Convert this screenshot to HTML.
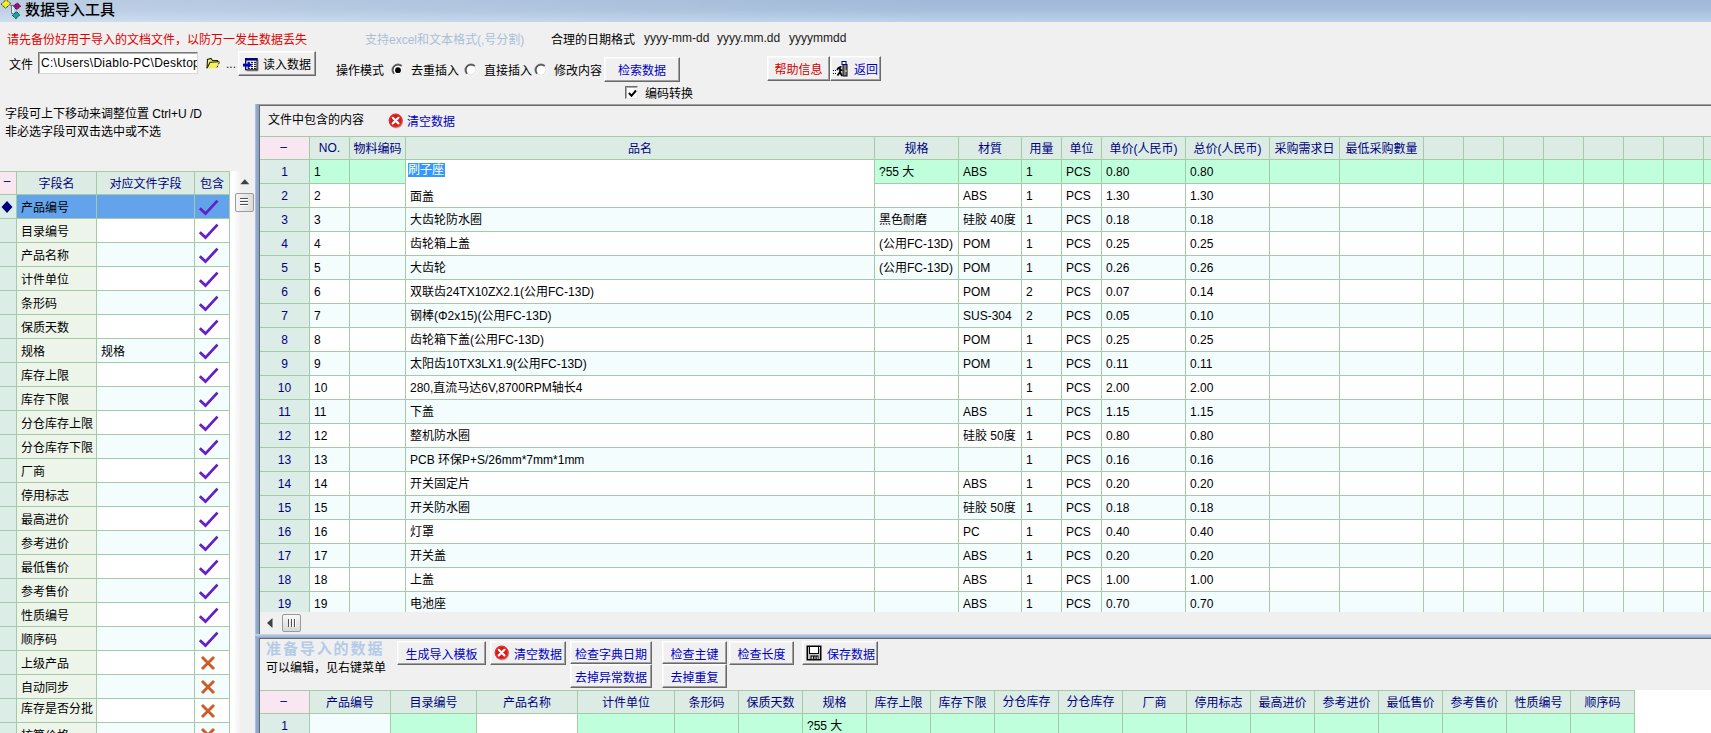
<!DOCTYPE html>
<html lang="zh"><head><meta charset="utf-8"><title>数据导入工具</title><style>
html,body{margin:0;padding:0;background:#f0f0f0}
body{width:1711px;height:733px;overflow:hidden;background:#f0f0f0;position:relative;font-family:"Liberation Sans","Noto Sans CJK SC",sans-serif;font-size:12px;color:#000}
div{position:absolute;box-sizing:border-box}
.t{white-space:nowrap;font-size:12px;line-height:14px}
.c{text-align:center}
.grid{overflow:hidden}
#title{left:0;top:0;width:1711px;height:22px;background:linear-gradient(to right,rgba(255,255,255,.28),rgba(255,255,255,0) 55%),linear-gradient(to bottom,#a2bad8 0,#a6bedb 45%,#bbd2ea 100%)}
.btn{border:1px solid;border-color:#fff #696969 #696969 #fff;box-shadow:inset -1px -1px 0 #a0a0a0,inset 1px 1px 0 #f8f8f8}
</style></head><body>
<div id="title"></div>
<svg style="position:absolute;left:0;top:0" width="24" height="22" viewBox="0 0 24 22">
<path d="M10 5.5 H13.5 M11.5 5.5 V13.5 H13.5" fill="none" stroke="#607890" stroke-width="1"/>
<rect x="12" y="6" width="2" height="7" fill="#d8f0ff"/>
<polygon points="1.2,4.2 6.2,-0.3 10.6,3.6 5.6,8.3" fill="#f0f020" stroke="#101000" stroke-width="1" stroke-dasharray="1.2,0.8"/>
<polygon points="13.3,6 17.4,3 20.8,6.2 16.6,9.6" fill="#b00878" stroke="#180010" stroke-width="1" stroke-dasharray="1.2,0.8"/>
<polygon points="12.4,15.3 16.4,11.6 19.8,15 15.8,18.8" fill="#10a8a8" stroke="#001818" stroke-width="1" stroke-dasharray="1.2,0.8"/>
</svg>
<div class="t" style="left:25px;top:1px;color:#000;font-size:15px;line-height:18px;font-weight:500;">数据导入工具</div>
<div class="t" style="left:7px;top:33px;color:#e00000;">请先备份好用于导入的文档文件，以防万一发生数据丢失</div>
<div class="t" style="left:365px;top:33px;color:#a9bfd8;">支持excel和文本格式(,号分割)</div>
<div class="t" style="left:551px;top:33px;color:#000;">合理的日期格式</div>
<div class="t" style="left:644px;top:31px;color:#202020;">yyyy-mm-dd</div>
<div class="t" style="left:717px;top:31px;color:#202020;">yyyy.mm.dd</div>
<div class="t" style="left:789px;top:31px;color:#202020;">yyyymmdd</div>
<div class="t" style="left:9px;top:58px;">文件</div>
<div class="b" style="left:38px;top:52px;width:160px;height:22px;background:#fff;border:1px solid;border-color:#7a7a7a #d8d8d8 #d8d8d8 #7a7a7a;box-shadow:inset 1px 1px 0 #b0b0b0;overflow:hidden;"><div class="t" style="left:2px;top:3px;letter-spacing:0.27px">C:\Users\Diablo-PC\Desktop\</div></div>
<svg style="position:absolute;left:206px;top:57px" width="15" height="13" viewBox="0 0 15 13">
<path d="M1 11.5 L1.5 2.5 L5 1.5 L6.5 3.5 L11.5 3.5 L11.5 5" fill="#f4f478" stroke="#202000" stroke-width="1.1"/>
<path d="M1 11.5 L4 5.2 L13.8 4.8 L10.5 11.5 Z" fill="#f0f060" stroke="none"/>
<path d="M1.2 11 L4 5.2 L13.5 4.8" fill="none" stroke="#202000" stroke-width="1.1"/>
<path d="M13.3 5.5 L11 10.5" fill="none" stroke="#202000" stroke-width="1" stroke-dasharray="2,1.5"/>
</svg>
<div class="t" style="left:226px;top:57px;color:#202020;">...</div>
<div class="b btn" style="left:238px;top:51px;width:78px;height:25px;background:#f0f0f0;"><svg style="position:absolute;left:3px;top:5px" width="18" height="16" viewBox="0 0 18 16">
<path d="M16 2.5 V13.8 H4.5" fill="none" stroke="#808080" stroke-width="1"/>
<rect x="3.7" y="1.5" width="11.3" height="11.3" fill="#fff" stroke="#000" stroke-width="1"/>
<rect x="3.2" y="1" width="12.3" height="2.6" fill="#000080"/>
<path d="M3.7 1 V13" stroke="#000060" stroke-width="1"/>
<path d="M5.8 5.3 H14.5 M5.8 7.3 H14.5 M5.8 9.4 H14.5 M5.8 11.4 H14.5" stroke="#000" stroke-width="1" stroke-dasharray="2.1,1"/>
<path d="M1 8.1 H7" stroke="#0000d0" stroke-width="2.9"/><polygon points="5.6,4.6 10,8.1 5.6,11.6" fill="#0000d0"/>
</svg><div class="t" style="left:24px;top:6px;color:#000">读入数据</div></div>
<div class="t" style="left:336px;top:64px;">操作模式</div>
<svg style="position:absolute;left:390.8px;top:63.3px" width="14" height="14" viewBox="0 0 14 14">
<circle cx="7" cy="7" r="6.2" fill="#fff"/>
<path d="M2.4 11.6 A6.5 6.5 0 0 1 11.6 2.4 L10.54 3.46 A5 5 0 0 0 3.46 10.54 Z" fill="#707070"/>
<path d="M3.1 10.9 A5.5 5.5 0 0 1 10.9 3.1 L10.2 3.8 A4.5 4.5 0 0 0 3.8 10.2 Z" fill="#404040"/>
<path d="M11.6 2.4 A6.5 6.5 0 0 1 2.4 11.6 L3.1 10.9 A5.5 5.5 0 0 0 10.9 3.1 Z" fill="#fbfbfb"/>
<path d="M10.9 3.1 A5.5 5.5 0 0 1 3.1 10.9 L3.8 10.2 A4.5 4.5 0 0 0 10.2 3.8 Z" fill="#dedede"/><circle cx="7" cy="7.2" r="2.9" fill="#000"/></svg>
<div class="t" style="left:411px;top:64px;">去重插入</div>
<svg style="position:absolute;left:463.8px;top:63.3px" width="14" height="14" viewBox="0 0 14 14">
<circle cx="7" cy="7" r="6.2" fill="#fff"/>
<path d="M2.4 11.6 A6.5 6.5 0 0 1 11.6 2.4 L10.54 3.46 A5 5 0 0 0 3.46 10.54 Z" fill="#707070"/>
<path d="M3.1 10.9 A5.5 5.5 0 0 1 10.9 3.1 L10.2 3.8 A4.5 4.5 0 0 0 3.8 10.2 Z" fill="#404040"/>
<path d="M11.6 2.4 A6.5 6.5 0 0 1 2.4 11.6 L3.1 10.9 A5.5 5.5 0 0 0 10.9 3.1 Z" fill="#fbfbfb"/>
<path d="M10.9 3.1 A5.5 5.5 0 0 1 3.1 10.9 L3.8 10.2 A4.5 4.5 0 0 0 10.2 3.8 Z" fill="#dedede"/></svg>
<div class="t" style="left:484px;top:64px;">直接插入</div>
<svg style="position:absolute;left:533.6px;top:63.3px" width="14" height="14" viewBox="0 0 14 14">
<circle cx="7" cy="7" r="6.2" fill="#fff"/>
<path d="M2.4 11.6 A6.5 6.5 0 0 1 11.6 2.4 L10.54 3.46 A5 5 0 0 0 3.46 10.54 Z" fill="#707070"/>
<path d="M3.1 10.9 A5.5 5.5 0 0 1 10.9 3.1 L10.2 3.8 A4.5 4.5 0 0 0 3.8 10.2 Z" fill="#404040"/>
<path d="M11.6 2.4 A6.5 6.5 0 0 1 2.4 11.6 L3.1 10.9 A5.5 5.5 0 0 0 10.9 3.1 Z" fill="#fbfbfb"/>
<path d="M10.9 3.1 A5.5 5.5 0 0 1 3.1 10.9 L3.8 10.2 A4.5 4.5 0 0 0 10.2 3.8 Z" fill="#dedede"/></svg>
<div class="t" style="left:554px;top:64px;">修改内容</div>
<div class="b btn" style="left:604px;top:57px;width:76px;height:25px;background:#f0f0f0;"><div class="t c" style="left:0;top:6px;width:74px;color:#0000c0">检索数据</div></div>
<div class="b btn" style="left:767px;top:56px;width:63px;height:25px;background:#f0f0f0;"><div class="t c" style="left:0;top:6px;width:61px;color:#d00000">帮助信息</div></div>
<div class="b btn" style="left:830px;top:56px;width:51px;height:25px;background:#f0f0f0;"><svg style="position:absolute;left:1px;top:3px" width="18" height="18" viewBox="0 0 18 18">
<rect x="11" y="4.5" width="4" height="11.5" fill="#808080" stroke="#000" stroke-width="1"/>
<rect x="10" y="1.5" width="4" height="3" fill="#fff" stroke="#000080" stroke-width="1"/>
<path d="M9.5 6.5 L6.5 8 L5 10 M8 8 L8 12 L5.5 15.5 M8 12 L10 16 M8 9.5 L10.5 10.5" fill="none" stroke="#000" stroke-width="1.7"/>
<rect x="13.5" y="10" width="1" height="2" fill="#e0e0e0"/>
<path d="M1 10.5 H4 M1 13.5 H4" stroke="#000" stroke-width="1" stroke-dasharray="1,1"/>
</svg><div class="t" style="left:23px;top:6px;color:#0000c0">返回</div></div>
<div class="b" style="left:625px;top:86px;width:13px;height:13px;background:#fff;border:1px solid;border-color:#6e6e6e #e8e8e8 #e8e8e8 #6e6e6e;box-shadow:inset 1px 1px 0 #a8a8a8;"><svg style="position:absolute;left:1px;top:1px" width="11" height="11" viewBox="0 0 11 11"><path d="M2 5 L4.5 7.8 L9 2.5" fill="none" stroke="#000" stroke-width="2"/></svg></div>
<div class="t" style="left:645px;top:87px;">编码转换</div>
<div class="t" style="left:5px;top:107px;">字段可上下移动来调整位置 Ctrl+U /D</div>
<div class="t" style="left:5px;top:125px;">非必选字段可双击选中或不选</div>
<div class="grid" style="left:0;top:171px;width:235px;height:562px;background:#fff">
<div style="left:0px;top:0px;width:230px;height:24px;background:#a5caa6;"></div>
<div style="left:0px;top:1px;width:16px;height:22px;background:#f8e6f0;"></div>
<div style="left:17px;top:1px;width:79px;height:22px;background:#dcece4;"></div>
<div style="left:97px;top:1px;width:97px;height:22px;background:#dcece4;"></div>
<div style="left:195px;top:1px;width:34px;height:22px;background:#dcece4;"></div>
<div class="t c" style="left:0px;top:3px;width:14px;color:#000080;">–</div>
<div class="t c" style="left:17px;top:6px;width:79px;color:#000080;">字段名</div>
<div class="t c" style="left:97px;top:6px;width:97px;color:#000080;">对应文件字段</div>
<div class="t c" style="left:195px;top:6px;width:34px;color:#000080;">包含</div>
<div style="left:0px;top:24px;width:230px;height:24px;background:#a5caa6;"></div>
<div style="left:0px;top:24px;width:16px;height:23px;background:#dcece6;"></div>
<div style="left:17px;top:24px;width:79px;height:23px;background:#62a3eb;"></div>
<div style="left:97px;top:24px;width:97px;height:23px;background:#62a3eb;"></div>
<div style="left:195px;top:24px;width:34px;height:23px;background:#62a3eb;"></div>
<div class="t" style="left:21px;top:30px;">产品编号</div>
<svg style="position:absolute;left:198px;top:27px" width="22" height="18" viewBox="0 0 22 18"><path d="M1.8 10.3 L7.5 15.6 L19.5 2.6" fill="none" stroke="#6420c4" stroke-width="2.8"/></svg>
<div style="left:0px;top:48px;width:230px;height:24px;background:#a5caa6;"></div>
<div style="left:0px;top:48px;width:16px;height:23px;background:#dcece6;"></div>
<div style="left:17px;top:48px;width:79px;height:23px;background:#edf5ea;"></div>
<div style="left:97px;top:48px;width:97px;height:23px;background:#fff;"></div>
<div style="left:195px;top:48px;width:34px;height:23px;background:#fff;"></div>
<div class="t" style="left:21px;top:54px;">目录编号</div>
<svg style="position:absolute;left:198px;top:51px" width="22" height="18" viewBox="0 0 22 18"><path d="M1.8 10.3 L7.5 15.6 L19.5 2.6" fill="none" stroke="#6420c4" stroke-width="2.8"/></svg>
<div style="left:0px;top:72px;width:230px;height:24px;background:#a5caa6;"></div>
<div style="left:0px;top:72px;width:16px;height:23px;background:#dcece6;"></div>
<div style="left:17px;top:72px;width:79px;height:23px;background:#edf5ea;"></div>
<div style="left:97px;top:72px;width:97px;height:23px;background:#f3fdfd;"></div>
<div style="left:195px;top:72px;width:34px;height:23px;background:#f3fdfd;"></div>
<div class="t" style="left:21px;top:78px;">产品名称</div>
<svg style="position:absolute;left:198px;top:75px" width="22" height="18" viewBox="0 0 22 18"><path d="M1.8 10.3 L7.5 15.6 L19.5 2.6" fill="none" stroke="#6420c4" stroke-width="2.8"/></svg>
<div style="left:0px;top:96px;width:230px;height:24px;background:#a5caa6;"></div>
<div style="left:0px;top:96px;width:16px;height:23px;background:#dcece6;"></div>
<div style="left:17px;top:96px;width:79px;height:23px;background:#edf5ea;"></div>
<div style="left:97px;top:96px;width:97px;height:23px;background:#fff;"></div>
<div style="left:195px;top:96px;width:34px;height:23px;background:#fff;"></div>
<div class="t" style="left:21px;top:102px;">计件单位</div>
<svg style="position:absolute;left:198px;top:99px" width="22" height="18" viewBox="0 0 22 18"><path d="M1.8 10.3 L7.5 15.6 L19.5 2.6" fill="none" stroke="#6420c4" stroke-width="2.8"/></svg>
<div style="left:0px;top:120px;width:230px;height:24px;background:#a5caa6;"></div>
<div style="left:0px;top:120px;width:16px;height:23px;background:#dcece6;"></div>
<div style="left:17px;top:120px;width:79px;height:23px;background:#edf5ea;"></div>
<div style="left:97px;top:120px;width:97px;height:23px;background:#f3fdfd;"></div>
<div style="left:195px;top:120px;width:34px;height:23px;background:#f3fdfd;"></div>
<div class="t" style="left:21px;top:126px;">条形码</div>
<svg style="position:absolute;left:198px;top:123px" width="22" height="18" viewBox="0 0 22 18"><path d="M1.8 10.3 L7.5 15.6 L19.5 2.6" fill="none" stroke="#6420c4" stroke-width="2.8"/></svg>
<div style="left:0px;top:144px;width:230px;height:24px;background:#a5caa6;"></div>
<div style="left:0px;top:144px;width:16px;height:23px;background:#dcece6;"></div>
<div style="left:17px;top:144px;width:79px;height:23px;background:#edf5ea;"></div>
<div style="left:97px;top:144px;width:97px;height:23px;background:#fff;"></div>
<div style="left:195px;top:144px;width:34px;height:23px;background:#fff;"></div>
<div class="t" style="left:21px;top:150px;">保质天数</div>
<svg style="position:absolute;left:198px;top:147px" width="22" height="18" viewBox="0 0 22 18"><path d="M1.8 10.3 L7.5 15.6 L19.5 2.6" fill="none" stroke="#6420c4" stroke-width="2.8"/></svg>
<div style="left:0px;top:168px;width:230px;height:24px;background:#a5caa6;"></div>
<div style="left:0px;top:168px;width:16px;height:23px;background:#dcece6;"></div>
<div style="left:17px;top:168px;width:79px;height:23px;background:#edf5ea;"></div>
<div style="left:97px;top:168px;width:97px;height:23px;background:#f3fdfd;"></div>
<div style="left:195px;top:168px;width:34px;height:23px;background:#f3fdfd;"></div>
<div class="t" style="left:21px;top:174px;">规格</div>
<div class="t" style="left:101px;top:174px;">规格</div>
<svg style="position:absolute;left:198px;top:171px" width="22" height="18" viewBox="0 0 22 18"><path d="M1.8 10.3 L7.5 15.6 L19.5 2.6" fill="none" stroke="#6420c4" stroke-width="2.8"/></svg>
<div style="left:0px;top:192px;width:230px;height:24px;background:#a5caa6;"></div>
<div style="left:0px;top:192px;width:16px;height:23px;background:#dcece6;"></div>
<div style="left:17px;top:192px;width:79px;height:23px;background:#edf5ea;"></div>
<div style="left:97px;top:192px;width:97px;height:23px;background:#fff;"></div>
<div style="left:195px;top:192px;width:34px;height:23px;background:#fff;"></div>
<div class="t" style="left:21px;top:198px;">库存上限</div>
<svg style="position:absolute;left:198px;top:195px" width="22" height="18" viewBox="0 0 22 18"><path d="M1.8 10.3 L7.5 15.6 L19.5 2.6" fill="none" stroke="#6420c4" stroke-width="2.8"/></svg>
<div style="left:0px;top:216px;width:230px;height:24px;background:#a5caa6;"></div>
<div style="left:0px;top:216px;width:16px;height:23px;background:#dcece6;"></div>
<div style="left:17px;top:216px;width:79px;height:23px;background:#edf5ea;"></div>
<div style="left:97px;top:216px;width:97px;height:23px;background:#f3fdfd;"></div>
<div style="left:195px;top:216px;width:34px;height:23px;background:#f3fdfd;"></div>
<div class="t" style="left:21px;top:222px;">库存下限</div>
<svg style="position:absolute;left:198px;top:219px" width="22" height="18" viewBox="0 0 22 18"><path d="M1.8 10.3 L7.5 15.6 L19.5 2.6" fill="none" stroke="#6420c4" stroke-width="2.8"/></svg>
<div style="left:0px;top:240px;width:230px;height:24px;background:#a5caa6;"></div>
<div style="left:0px;top:240px;width:16px;height:23px;background:#dcece6;"></div>
<div style="left:17px;top:240px;width:79px;height:23px;background:#edf5ea;"></div>
<div style="left:97px;top:240px;width:97px;height:23px;background:#fff;"></div>
<div style="left:195px;top:240px;width:34px;height:23px;background:#fff;"></div>
<div class="t" style="left:21px;top:246px;">分仓库存上限</div>
<svg style="position:absolute;left:198px;top:243px" width="22" height="18" viewBox="0 0 22 18"><path d="M1.8 10.3 L7.5 15.6 L19.5 2.6" fill="none" stroke="#6420c4" stroke-width="2.8"/></svg>
<div style="left:0px;top:264px;width:230px;height:24px;background:#a5caa6;"></div>
<div style="left:0px;top:264px;width:16px;height:23px;background:#dcece6;"></div>
<div style="left:17px;top:264px;width:79px;height:23px;background:#edf5ea;"></div>
<div style="left:97px;top:264px;width:97px;height:23px;background:#f3fdfd;"></div>
<div style="left:195px;top:264px;width:34px;height:23px;background:#f3fdfd;"></div>
<div class="t" style="left:21px;top:270px;">分仓库存下限</div>
<svg style="position:absolute;left:198px;top:267px" width="22" height="18" viewBox="0 0 22 18"><path d="M1.8 10.3 L7.5 15.6 L19.5 2.6" fill="none" stroke="#6420c4" stroke-width="2.8"/></svg>
<div style="left:0px;top:288px;width:230px;height:24px;background:#a5caa6;"></div>
<div style="left:0px;top:288px;width:16px;height:23px;background:#dcece6;"></div>
<div style="left:17px;top:288px;width:79px;height:23px;background:#edf5ea;"></div>
<div style="left:97px;top:288px;width:97px;height:23px;background:#fff;"></div>
<div style="left:195px;top:288px;width:34px;height:23px;background:#fff;"></div>
<div class="t" style="left:21px;top:294px;">厂商</div>
<svg style="position:absolute;left:198px;top:291px" width="22" height="18" viewBox="0 0 22 18"><path d="M1.8 10.3 L7.5 15.6 L19.5 2.6" fill="none" stroke="#6420c4" stroke-width="2.8"/></svg>
<div style="left:0px;top:312px;width:230px;height:24px;background:#a5caa6;"></div>
<div style="left:0px;top:312px;width:16px;height:23px;background:#dcece6;"></div>
<div style="left:17px;top:312px;width:79px;height:23px;background:#edf5ea;"></div>
<div style="left:97px;top:312px;width:97px;height:23px;background:#f3fdfd;"></div>
<div style="left:195px;top:312px;width:34px;height:23px;background:#f3fdfd;"></div>
<div class="t" style="left:21px;top:318px;">停用标志</div>
<svg style="position:absolute;left:198px;top:315px" width="22" height="18" viewBox="0 0 22 18"><path d="M1.8 10.3 L7.5 15.6 L19.5 2.6" fill="none" stroke="#6420c4" stroke-width="2.8"/></svg>
<div style="left:0px;top:336px;width:230px;height:24px;background:#a5caa6;"></div>
<div style="left:0px;top:336px;width:16px;height:23px;background:#dcece6;"></div>
<div style="left:17px;top:336px;width:79px;height:23px;background:#edf5ea;"></div>
<div style="left:97px;top:336px;width:97px;height:23px;background:#fff;"></div>
<div style="left:195px;top:336px;width:34px;height:23px;background:#fff;"></div>
<div class="t" style="left:21px;top:342px;">最高进价</div>
<svg style="position:absolute;left:198px;top:339px" width="22" height="18" viewBox="0 0 22 18"><path d="M1.8 10.3 L7.5 15.6 L19.5 2.6" fill="none" stroke="#6420c4" stroke-width="2.8"/></svg>
<div style="left:0px;top:360px;width:230px;height:24px;background:#a5caa6;"></div>
<div style="left:0px;top:360px;width:16px;height:23px;background:#dcece6;"></div>
<div style="left:17px;top:360px;width:79px;height:23px;background:#edf5ea;"></div>
<div style="left:97px;top:360px;width:97px;height:23px;background:#f3fdfd;"></div>
<div style="left:195px;top:360px;width:34px;height:23px;background:#f3fdfd;"></div>
<div class="t" style="left:21px;top:366px;">参考进价</div>
<svg style="position:absolute;left:198px;top:363px" width="22" height="18" viewBox="0 0 22 18"><path d="M1.8 10.3 L7.5 15.6 L19.5 2.6" fill="none" stroke="#6420c4" stroke-width="2.8"/></svg>
<div style="left:0px;top:384px;width:230px;height:24px;background:#a5caa6;"></div>
<div style="left:0px;top:384px;width:16px;height:23px;background:#dcece6;"></div>
<div style="left:17px;top:384px;width:79px;height:23px;background:#edf5ea;"></div>
<div style="left:97px;top:384px;width:97px;height:23px;background:#fff;"></div>
<div style="left:195px;top:384px;width:34px;height:23px;background:#fff;"></div>
<div class="t" style="left:21px;top:390px;">最低售价</div>
<svg style="position:absolute;left:198px;top:387px" width="22" height="18" viewBox="0 0 22 18"><path d="M1.8 10.3 L7.5 15.6 L19.5 2.6" fill="none" stroke="#6420c4" stroke-width="2.8"/></svg>
<div style="left:0px;top:408px;width:230px;height:24px;background:#a5caa6;"></div>
<div style="left:0px;top:408px;width:16px;height:23px;background:#dcece6;"></div>
<div style="left:17px;top:408px;width:79px;height:23px;background:#edf5ea;"></div>
<div style="left:97px;top:408px;width:97px;height:23px;background:#f3fdfd;"></div>
<div style="left:195px;top:408px;width:34px;height:23px;background:#f3fdfd;"></div>
<div class="t" style="left:21px;top:414px;">参考售价</div>
<svg style="position:absolute;left:198px;top:411px" width="22" height="18" viewBox="0 0 22 18"><path d="M1.8 10.3 L7.5 15.6 L19.5 2.6" fill="none" stroke="#6420c4" stroke-width="2.8"/></svg>
<div style="left:0px;top:432px;width:230px;height:24px;background:#a5caa6;"></div>
<div style="left:0px;top:432px;width:16px;height:23px;background:#dcece6;"></div>
<div style="left:17px;top:432px;width:79px;height:23px;background:#edf5ea;"></div>
<div style="left:97px;top:432px;width:97px;height:23px;background:#fff;"></div>
<div style="left:195px;top:432px;width:34px;height:23px;background:#fff;"></div>
<div class="t" style="left:21px;top:438px;">性质编号</div>
<svg style="position:absolute;left:198px;top:435px" width="22" height="18" viewBox="0 0 22 18"><path d="M1.8 10.3 L7.5 15.6 L19.5 2.6" fill="none" stroke="#6420c4" stroke-width="2.8"/></svg>
<div style="left:0px;top:456px;width:230px;height:24px;background:#a5caa6;"></div>
<div style="left:0px;top:456px;width:16px;height:23px;background:#dcece6;"></div>
<div style="left:17px;top:456px;width:79px;height:23px;background:#edf5ea;"></div>
<div style="left:97px;top:456px;width:97px;height:23px;background:#f3fdfd;"></div>
<div style="left:195px;top:456px;width:34px;height:23px;background:#f3fdfd;"></div>
<div class="t" style="left:21px;top:462px;">顺序码</div>
<svg style="position:absolute;left:198px;top:459px" width="22" height="18" viewBox="0 0 22 18"><path d="M1.8 10.3 L7.5 15.6 L19.5 2.6" fill="none" stroke="#6420c4" stroke-width="2.8"/></svg>
<div style="left:0px;top:480px;width:230px;height:24px;background:#a5caa6;"></div>
<div style="left:0px;top:480px;width:16px;height:23px;background:#dcece6;"></div>
<div style="left:17px;top:480px;width:79px;height:23px;background:#edf5ea;"></div>
<div style="left:97px;top:480px;width:97px;height:23px;background:#fff;"></div>
<div style="left:195px;top:480px;width:34px;height:23px;background:#fff;"></div>
<div class="t" style="left:21px;top:486px;">上级产品</div>
<svg style="position:absolute;left:200px;top:483.5px" width="16" height="16" viewBox="0 0 16 16"><path d="M2 2 L14 14 M14 2 L2 14" fill="none" stroke="#cc5c28" stroke-width="2.9"/></svg>
<div style="left:0px;top:504px;width:230px;height:24px;background:#a5caa6;"></div>
<div style="left:0px;top:504px;width:16px;height:23px;background:#dcece6;"></div>
<div style="left:17px;top:504px;width:79px;height:23px;background:#edf5ea;"></div>
<div style="left:97px;top:504px;width:97px;height:23px;background:#f3fdfd;"></div>
<div style="left:195px;top:504px;width:34px;height:23px;background:#f3fdfd;"></div>
<div class="t" style="left:21px;top:510px;">自动同步</div>
<svg style="position:absolute;left:200px;top:507.5px" width="16" height="16" viewBox="0 0 16 16"><path d="M2 2 L14 14 M14 2 L2 14" fill="none" stroke="#cc5c28" stroke-width="2.9"/></svg>
<div style="left:0px;top:528px;width:230px;height:24px;background:#a5caa6;"></div>
<div style="left:0px;top:528px;width:16px;height:23px;background:#dcece6;"></div>
<div style="left:17px;top:528px;width:79px;height:23px;background:#edf5ea;"></div>
<div style="left:97px;top:528px;width:97px;height:23px;background:#fff;"></div>
<div style="left:195px;top:528px;width:34px;height:23px;background:#fff;"></div>
<div class="t" style="left:21px;top:531px;">库存是否分批</div>
<svg style="position:absolute;left:200px;top:531.5px" width="16" height="16" viewBox="0 0 16 16"><path d="M2 2 L14 14 M14 2 L2 14" fill="none" stroke="#cc5c28" stroke-width="2.9"/></svg>
<div style="left:0px;top:552px;width:230px;height:24px;background:#a5caa6;"></div>
<div style="left:0px;top:552px;width:16px;height:23px;background:#dcece6;"></div>
<div style="left:17px;top:552px;width:79px;height:23px;background:#edf5ea;"></div>
<div style="left:97px;top:552px;width:97px;height:23px;background:#f3fdfd;"></div>
<div style="left:195px;top:552px;width:34px;height:23px;background:#f3fdfd;"></div>
<div class="t" style="left:21px;top:558px;">核算价格</div>
<svg style="position:absolute;left:200px;top:555.5px" width="16" height="16" viewBox="0 0 16 16"><path d="M2 2 L14 14 M14 2 L2 14" fill="none" stroke="#cc5c28" stroke-width="2.9"/></svg>
<svg style="position:absolute;left:1.4px;top:29px" width="12" height="14" viewBox="0 0 12 14"><polygon points="6,1 11.5,7 6,13 0.5,7" fill="#000080"/></svg>
</div>
<div style="left:235px;top:171px;width:20px;height:562px;background:linear-gradient(to right,#fbfbfb,#f0f0f0 30%);"></div>
<svg style="position:absolute;left:239px;top:178px" width="12" height="8" viewBox="0 0 12 8"><polygon points="5.8,1.2 10.3,6.2 1.3,6.2" fill="#404040"/></svg>
<div class="b" style="left:235px;top:193px;width:19px;height:19px;background:linear-gradient(to right,#f6f6f6,#dcdcdc);border:1px solid #9a9a9a;border-radius:2px;"><div style="position:absolute;left:4px;top:4px;width:8px;height:1px;background:#505050;box-shadow:0 3px 0 #505050,0 6px 0 #505050,0 1px 0 #fff,0 4px 0 #fff,0 7px 0 #fff"></div></div>
<div style="left:255px;top:104px;width:4px;height:629px;background:linear-gradient(to right,#b9cbe2,#8ea9cb 40%,#87a2c6);"></div>
<div style="left:259px;top:104px;width:1452px;height:1px;background:#a0a0a0;"></div>
<div style="left:259px;top:105px;width:1452px;height:1px;background:#696969;"></div>
<div style="left:259px;top:105px;width:1px;height:628px;background:#696969;"></div>
<div class="t" style="left:268px;top:113px;">文件中包含的内容</div>
<svg style="position:absolute;left:388px;top:113px" width="16" height="16" viewBox="0 0 16 16">
<circle cx="8.3" cy="8.5" r="7" fill="#9a9a9a" opacity="0.6"/>
<circle cx="7.6" cy="7.6" r="7" fill="#dc1818"/><circle cx="7.6" cy="7.6" r="6.2" fill="none" stroke="#f06060" stroke-width="0.8" opacity="0.6"/>
<path d="M4.8 4.8 L10.4 10.4 M10.4 4.8 L4.8 10.4" stroke="#fff" stroke-width="2.2" stroke-linecap="round"/></svg>
<div class="t" style="left:407px;top:115px;color:#0000c0;">清空数据</div>
<div class="grid" style="left:260px;top:136px;width:1451px;height:476px;background:#fff">
<div style="left:0px;top:0px;width:1451px;height:24px;background:#a5caa6;"></div>
<div style="left:0px;top:1px;width:49px;height:22px;background:#f8e6f0;"></div>
<div style="left:50px;top:1px;width:1401px;height:22px;background:#dcece4;"></div>
<div class="b" style="left:0px;top:24px;width:1451px;height:24px;background:#c0ffdc;border-bottom:1px solid #a5caa6;"></div>
<div style="left:0px;top:24px;width:49px;height:23px;background:#dcece6;"></div>
<div class="b" style="left:0px;top:48px;width:1451px;height:24px;background:#fff;border-bottom:1px solid #a5caa6;"></div>
<div style="left:0px;top:48px;width:49px;height:23px;background:#dcece6;"></div>
<div class="b" style="left:0px;top:72px;width:1451px;height:24px;background:#f3fdfd;border-bottom:1px solid #a5caa6;"></div>
<div style="left:0px;top:72px;width:49px;height:23px;background:#dcece6;"></div>
<div class="b" style="left:0px;top:96px;width:1451px;height:24px;background:#fff;border-bottom:1px solid #a5caa6;"></div>
<div style="left:0px;top:96px;width:49px;height:23px;background:#dcece6;"></div>
<div class="b" style="left:0px;top:120px;width:1451px;height:24px;background:#f3fdfd;border-bottom:1px solid #a5caa6;"></div>
<div style="left:0px;top:120px;width:49px;height:23px;background:#dcece6;"></div>
<div class="b" style="left:0px;top:144px;width:1451px;height:24px;background:#fff;border-bottom:1px solid #a5caa6;"></div>
<div style="left:0px;top:144px;width:49px;height:23px;background:#dcece6;"></div>
<div class="b" style="left:0px;top:168px;width:1451px;height:24px;background:#f3fdfd;border-bottom:1px solid #a5caa6;"></div>
<div style="left:0px;top:168px;width:49px;height:23px;background:#dcece6;"></div>
<div class="b" style="left:0px;top:192px;width:1451px;height:24px;background:#fff;border-bottom:1px solid #a5caa6;"></div>
<div style="left:0px;top:192px;width:49px;height:23px;background:#dcece6;"></div>
<div class="b" style="left:0px;top:216px;width:1451px;height:24px;background:#f3fdfd;border-bottom:1px solid #a5caa6;"></div>
<div style="left:0px;top:216px;width:49px;height:23px;background:#dcece6;"></div>
<div class="b" style="left:0px;top:240px;width:1451px;height:24px;background:#fff;border-bottom:1px solid #a5caa6;"></div>
<div style="left:0px;top:240px;width:49px;height:23px;background:#dcece6;"></div>
<div class="b" style="left:0px;top:264px;width:1451px;height:24px;background:#f3fdfd;border-bottom:1px solid #a5caa6;"></div>
<div style="left:0px;top:264px;width:49px;height:23px;background:#dcece6;"></div>
<div class="b" style="left:0px;top:288px;width:1451px;height:24px;background:#fff;border-bottom:1px solid #a5caa6;"></div>
<div style="left:0px;top:288px;width:49px;height:23px;background:#dcece6;"></div>
<div class="b" style="left:0px;top:312px;width:1451px;height:24px;background:#f3fdfd;border-bottom:1px solid #a5caa6;"></div>
<div style="left:0px;top:312px;width:49px;height:23px;background:#dcece6;"></div>
<div class="b" style="left:0px;top:336px;width:1451px;height:24px;background:#fff;border-bottom:1px solid #a5caa6;"></div>
<div style="left:0px;top:336px;width:49px;height:23px;background:#dcece6;"></div>
<div class="b" style="left:0px;top:360px;width:1451px;height:24px;background:#f3fdfd;border-bottom:1px solid #a5caa6;"></div>
<div style="left:0px;top:360px;width:49px;height:23px;background:#dcece6;"></div>
<div class="b" style="left:0px;top:384px;width:1451px;height:24px;background:#fff;border-bottom:1px solid #a5caa6;"></div>
<div style="left:0px;top:384px;width:49px;height:23px;background:#dcece6;"></div>
<div class="b" style="left:0px;top:408px;width:1451px;height:24px;background:#f3fdfd;border-bottom:1px solid #a5caa6;"></div>
<div style="left:0px;top:408px;width:49px;height:23px;background:#dcece6;"></div>
<div class="b" style="left:0px;top:432px;width:1451px;height:24px;background:#fff;border-bottom:1px solid #a5caa6;"></div>
<div style="left:0px;top:432px;width:49px;height:23px;background:#dcece6;"></div>
<div class="b" style="left:0px;top:456px;width:1451px;height:24px;background:#f3fdfd;border-bottom:1px solid #a5caa6;"></div>
<div style="left:0px;top:456px;width:49px;height:23px;background:#dcece6;"></div>
<div style="left:49px;top:0px;width:1px;height:476px;background:#a5caa6;"></div>
<div style="left:89px;top:0px;width:1px;height:476px;background:#a5caa6;"></div>
<div style="left:145px;top:0px;width:1px;height:476px;background:#a5caa6;"></div>
<div style="left:614px;top:0px;width:1px;height:476px;background:#a5caa6;"></div>
<div style="left:698px;top:0px;width:1px;height:476px;background:#a5caa6;"></div>
<div style="left:761px;top:0px;width:1px;height:476px;background:#a5caa6;"></div>
<div style="left:801px;top:0px;width:1px;height:476px;background:#a5caa6;"></div>
<div style="left:841px;top:0px;width:1px;height:476px;background:#a5caa6;"></div>
<div style="left:925px;top:0px;width:1px;height:476px;background:#a5caa6;"></div>
<div style="left:1009px;top:0px;width:1px;height:476px;background:#a5caa6;"></div>
<div style="left:1079px;top:0px;width:1px;height:476px;background:#a5caa6;"></div>
<div style="left:1163px;top:0px;width:1px;height:476px;background:#a5caa6;"></div>
<div style="left:1203px;top:0px;width:1px;height:476px;background:#a5caa6;"></div>
<div style="left:1243px;top:0px;width:1px;height:476px;background:#a5caa6;"></div>
<div style="left:1283px;top:0px;width:1px;height:476px;background:#a5caa6;"></div>
<div style="left:1323px;top:0px;width:1px;height:476px;background:#a5caa6;"></div>
<div style="left:1363px;top:0px;width:1px;height:476px;background:#a5caa6;"></div>
<div style="left:1403px;top:0px;width:1px;height:476px;background:#a5caa6;"></div>
<div style="left:1443px;top:0px;width:1px;height:476px;background:#a5caa6;"></div>
<div style="left:146px;top:24px;width:468px;height:24px;background:#fff;"></div>
<div style="left:148px;top:27px;width:37px;height:14px;background:#3399ff;"></div>
<div class="t" style="left:148px;top:27px;color:#fff;">刷子座</div>
<div class="t c" style="left:-1px;top:4px;width:49px;color:#000080;">–</div>
<div class="t c" style="left:50px;top:5px;width:39px;color:#000080;">NO.</div>
<div class="t c" style="left:90px;top:6px;width:55px;color:#000080;">物料编码</div>
<div class="t c" style="left:146px;top:6px;width:468px;color:#000080;">品名</div>
<div class="t c" style="left:615px;top:6px;width:83px;color:#000080;">规格</div>
<div class="t c" style="left:699px;top:6px;width:62px;color:#000080;">材質</div>
<div class="t c" style="left:762px;top:6px;width:39px;color:#000080;">用量</div>
<div class="t c" style="left:802px;top:6px;width:39px;color:#000080;">单位</div>
<div class="t c" style="left:842px;top:6px;width:83px;color:#000080;">单价(人民币)</div>
<div class="t c" style="left:926px;top:6px;width:83px;color:#000080;">总价(人民币)</div>
<div class="t c" style="left:1010px;top:6px;width:69px;color:#000080;">采购需求日</div>
<div class="t c" style="left:1080px;top:6px;width:83px;color:#000080;">最低采购數量</div>
<div class="t c" style="left:0px;top:29px;width:49px;color:#000080;">1</div>
<div class="t" style="left:54px;top:29px;">1</div>
<div class="t" style="left:619px;top:29px;">?55 大</div>
<div class="t" style="left:703px;top:29px;">ABS</div>
<div class="t" style="left:766px;top:29px;">1</div>
<div class="t" style="left:806px;top:29px;">PCS</div>
<div class="t" style="left:846px;top:29px;">0.80</div>
<div class="t" style="left:930px;top:29px;">0.80</div>
<div class="t c" style="left:0px;top:53px;width:49px;color:#000080;">2</div>
<div class="t" style="left:54px;top:53px;">2</div>
<div class="t" style="left:150px;top:54px;">面盖</div>
<div class="t" style="left:703px;top:53px;">ABS</div>
<div class="t" style="left:766px;top:53px;">1</div>
<div class="t" style="left:806px;top:53px;">PCS</div>
<div class="t" style="left:846px;top:53px;">1.30</div>
<div class="t" style="left:930px;top:53px;">1.30</div>
<div class="t c" style="left:0px;top:77px;width:49px;color:#000080;">3</div>
<div class="t" style="left:54px;top:77px;">3</div>
<div class="t" style="left:150px;top:77px;">大齿轮防水圈</div>
<div class="t" style="left:619px;top:77px;">黑色耐磨</div>
<div class="t" style="left:703px;top:77px;">硅胶 40度</div>
<div class="t" style="left:766px;top:77px;">1</div>
<div class="t" style="left:806px;top:77px;">PCS</div>
<div class="t" style="left:846px;top:77px;">0.18</div>
<div class="t" style="left:930px;top:77px;">0.18</div>
<div class="t c" style="left:0px;top:101px;width:49px;color:#000080;">4</div>
<div class="t" style="left:54px;top:101px;">4</div>
<div class="t" style="left:150px;top:101px;">齿轮箱上盖</div>
<div class="t" style="left:619px;top:101px;">(公用FC-13D)</div>
<div class="t" style="left:703px;top:101px;">POM</div>
<div class="t" style="left:766px;top:101px;">1</div>
<div class="t" style="left:806px;top:101px;">PCS</div>
<div class="t" style="left:846px;top:101px;">0.25</div>
<div class="t" style="left:930px;top:101px;">0.25</div>
<div class="t c" style="left:0px;top:125px;width:49px;color:#000080;">5</div>
<div class="t" style="left:54px;top:125px;">5</div>
<div class="t" style="left:150px;top:125px;">大齿轮</div>
<div class="t" style="left:619px;top:125px;">(公用FC-13D)</div>
<div class="t" style="left:703px;top:125px;">POM</div>
<div class="t" style="left:766px;top:125px;">1</div>
<div class="t" style="left:806px;top:125px;">PCS</div>
<div class="t" style="left:846px;top:125px;">0.26</div>
<div class="t" style="left:930px;top:125px;">0.26</div>
<div class="t c" style="left:0px;top:149px;width:49px;color:#000080;">6</div>
<div class="t" style="left:54px;top:149px;">6</div>
<div class="t" style="left:150px;top:149px;">双联齿24TX10ZX2.1(公用FC-13D)</div>
<div class="t" style="left:703px;top:149px;">POM</div>
<div class="t" style="left:766px;top:149px;">2</div>
<div class="t" style="left:806px;top:149px;">PCS</div>
<div class="t" style="left:846px;top:149px;">0.07</div>
<div class="t" style="left:930px;top:149px;">0.14</div>
<div class="t c" style="left:0px;top:173px;width:49px;color:#000080;">7</div>
<div class="t" style="left:54px;top:173px;">7</div>
<div class="t" style="left:150px;top:173px;">钢棒(Φ2x15)(公用FC-13D)</div>
<div class="t" style="left:703px;top:173px;">SUS-304</div>
<div class="t" style="left:766px;top:173px;">2</div>
<div class="t" style="left:806px;top:173px;">PCS</div>
<div class="t" style="left:846px;top:173px;">0.05</div>
<div class="t" style="left:930px;top:173px;">0.10</div>
<div class="t c" style="left:0px;top:197px;width:49px;color:#000080;">8</div>
<div class="t" style="left:54px;top:197px;">8</div>
<div class="t" style="left:150px;top:197px;">齿轮箱下盖(公用FC-13D)</div>
<div class="t" style="left:703px;top:197px;">POM</div>
<div class="t" style="left:766px;top:197px;">1</div>
<div class="t" style="left:806px;top:197px;">PCS</div>
<div class="t" style="left:846px;top:197px;">0.25</div>
<div class="t" style="left:930px;top:197px;">0.25</div>
<div class="t c" style="left:0px;top:221px;width:49px;color:#000080;">9</div>
<div class="t" style="left:54px;top:221px;">9</div>
<div class="t" style="left:150px;top:221px;">太阳齿10TX3LX1.9(公用FC-13D)</div>
<div class="t" style="left:703px;top:221px;">POM</div>
<div class="t" style="left:766px;top:221px;">1</div>
<div class="t" style="left:806px;top:221px;">PCS</div>
<div class="t" style="left:846px;top:221px;">0.11</div>
<div class="t" style="left:930px;top:221px;">0.11</div>
<div class="t c" style="left:0px;top:245px;width:49px;color:#000080;">10</div>
<div class="t" style="left:54px;top:245px;">10</div>
<div class="t" style="left:150px;top:245px;">280,直流马达6V,8700RPM轴长4</div>
<div class="t" style="left:766px;top:245px;">1</div>
<div class="t" style="left:806px;top:245px;">PCS</div>
<div class="t" style="left:846px;top:245px;">2.00</div>
<div class="t" style="left:930px;top:245px;">2.00</div>
<div class="t c" style="left:0px;top:269px;width:49px;color:#000080;">11</div>
<div class="t" style="left:54px;top:269px;">11</div>
<div class="t" style="left:150px;top:269px;">下盖</div>
<div class="t" style="left:703px;top:269px;">ABS</div>
<div class="t" style="left:766px;top:269px;">1</div>
<div class="t" style="left:806px;top:269px;">PCS</div>
<div class="t" style="left:846px;top:269px;">1.15</div>
<div class="t" style="left:930px;top:269px;">1.15</div>
<div class="t c" style="left:0px;top:293px;width:49px;color:#000080;">12</div>
<div class="t" style="left:54px;top:293px;">12</div>
<div class="t" style="left:150px;top:293px;">整机防水圈</div>
<div class="t" style="left:703px;top:293px;">硅胶 50度</div>
<div class="t" style="left:766px;top:293px;">1</div>
<div class="t" style="left:806px;top:293px;">PCS</div>
<div class="t" style="left:846px;top:293px;">0.80</div>
<div class="t" style="left:930px;top:293px;">0.80</div>
<div class="t c" style="left:0px;top:317px;width:49px;color:#000080;">13</div>
<div class="t" style="left:54px;top:317px;">13</div>
<div class="t" style="left:150px;top:317px;">PCB 环保P+S/26mm*7mm*1mm</div>
<div class="t" style="left:766px;top:317px;">1</div>
<div class="t" style="left:806px;top:317px;">PCS</div>
<div class="t" style="left:846px;top:317px;">0.16</div>
<div class="t" style="left:930px;top:317px;">0.16</div>
<div class="t c" style="left:0px;top:341px;width:49px;color:#000080;">14</div>
<div class="t" style="left:54px;top:341px;">14</div>
<div class="t" style="left:150px;top:341px;">开关固定片</div>
<div class="t" style="left:703px;top:341px;">ABS</div>
<div class="t" style="left:766px;top:341px;">1</div>
<div class="t" style="left:806px;top:341px;">PCS</div>
<div class="t" style="left:846px;top:341px;">0.20</div>
<div class="t" style="left:930px;top:341px;">0.20</div>
<div class="t c" style="left:0px;top:365px;width:49px;color:#000080;">15</div>
<div class="t" style="left:54px;top:365px;">15</div>
<div class="t" style="left:150px;top:365px;">开关防水圈</div>
<div class="t" style="left:703px;top:365px;">硅胶 50度</div>
<div class="t" style="left:766px;top:365px;">1</div>
<div class="t" style="left:806px;top:365px;">PCS</div>
<div class="t" style="left:846px;top:365px;">0.18</div>
<div class="t" style="left:930px;top:365px;">0.18</div>
<div class="t c" style="left:0px;top:389px;width:49px;color:#000080;">16</div>
<div class="t" style="left:54px;top:389px;">16</div>
<div class="t" style="left:150px;top:389px;">灯罩</div>
<div class="t" style="left:703px;top:389px;">PC</div>
<div class="t" style="left:766px;top:389px;">1</div>
<div class="t" style="left:806px;top:389px;">PCS</div>
<div class="t" style="left:846px;top:389px;">0.40</div>
<div class="t" style="left:930px;top:389px;">0.40</div>
<div class="t c" style="left:0px;top:413px;width:49px;color:#000080;">17</div>
<div class="t" style="left:54px;top:413px;">17</div>
<div class="t" style="left:150px;top:413px;">开关盖</div>
<div class="t" style="left:703px;top:413px;">ABS</div>
<div class="t" style="left:766px;top:413px;">1</div>
<div class="t" style="left:806px;top:413px;">PCS</div>
<div class="t" style="left:846px;top:413px;">0.20</div>
<div class="t" style="left:930px;top:413px;">0.20</div>
<div class="t c" style="left:0px;top:437px;width:49px;color:#000080;">18</div>
<div class="t" style="left:54px;top:437px;">18</div>
<div class="t" style="left:150px;top:437px;">上盖</div>
<div class="t" style="left:703px;top:437px;">ABS</div>
<div class="t" style="left:766px;top:437px;">1</div>
<div class="t" style="left:806px;top:437px;">PCS</div>
<div class="t" style="left:846px;top:437px;">1.00</div>
<div class="t" style="left:930px;top:437px;">1.00</div>
<div class="t c" style="left:0px;top:461px;width:49px;color:#000080;">19</div>
<div class="t" style="left:54px;top:461px;">19</div>
<div class="t" style="left:150px;top:461px;">电池座</div>
<div class="t" style="left:703px;top:461px;">ABS</div>
<div class="t" style="left:766px;top:461px;">1</div>
<div class="t" style="left:806px;top:461px;">PCS</div>
<div class="t" style="left:846px;top:461px;">0.70</div>
<div class="t" style="left:930px;top:461px;">0.70</div>
</div>
<div style="left:260px;top:612px;width:1451px;height:22px;background:#f0f0f0;"></div>
<svg style="position:absolute;left:266px;top:617px" width="8" height="12" viewBox="0 0 8 12"><polygon points="1,6 6.5,1 6.5,11" fill="#404040"/></svg>
<div class="b" style="left:282px;top:614px;width:19px;height:18px;background:linear-gradient(to bottom,#f8f8f8,#d8d8d8);border:1px solid #9a9a9a;border-radius:2px;"><div style="position:absolute;left:5px;top:4px;width:1px;height:8px;background:#505050;box-shadow:3px 0 0 #505050,6px 0 0 #505050,1px 0 0 #fff,4px 0 0 #fff,7px 0 0 #fff"></div></div>
<div style="left:255px;top:634px;width:1456px;height:4px;background:linear-gradient(to bottom,#c9daee,#a9c0dd 50%,#86a1c5);"></div>
<div style="left:259px;top:638px;width:1452px;height:1px;background:#696969;"></div>
<div class="t" style="left:266px;top:639px;color:#b3cbe8;font-size:15px;line-height:20px;font-weight:bold;letter-spacing:1.9px;">准备导入的数据</div>
<div class="t" style="left:266px;top:661px;">可以编辑，见右键菜单</div>
<div class="b btn" style="left:397px;top:641px;width:89px;height:24px;background:#f0f0f0;"><div class="t c" style="left:0;top:6px;width:87px;color:#0000c0">生成导入模板</div></div>
<div class="b btn" style="left:490px;top:641px;width:76px;height:24px;background:#f0f0f0;"><svg style="position:absolute;left:3px;top:3px" width="16" height="16" viewBox="0 0 16 16">
<circle cx="8.3" cy="8.5" r="7" fill="#9a9a9a" opacity="0.6"/>
<circle cx="7.6" cy="7.6" r="7" fill="#dc1818"/><circle cx="7.6" cy="7.6" r="6.2" fill="none" stroke="#f06060" stroke-width="0.8" opacity="0.6"/>
<path d="M4.8 4.8 L10.4 10.4 M10.4 4.8 L4.8 10.4" stroke="#fff" stroke-width="2.2" stroke-linecap="round"/></svg><div class="t" style="left:23px;top:6px;color:#0000c0">清空数据</div></div>
<div class="b btn" style="left:570px;top:641px;width:82px;height:23px;background:#f0f0f0;"><div class="t c" style="left:0;top:6px;width:80px;color:#0000c0">检查字典日期</div></div>
<div class="b btn" style="left:570px;top:664px;width:82px;height:24px;background:#f0f0f0;"><div class="t c" style="left:0;top:6px;width:80px;color:#0000c0">去掉异常数据</div></div>
<div class="b btn" style="left:662px;top:641px;width:65px;height:23px;background:#f0f0f0;"><div class="t c" style="left:0;top:6px;width:63px;color:#0000c0">检查主键</div></div>
<div class="b btn" style="left:662px;top:664px;width:65px;height:24px;background:#f0f0f0;"><div class="t c" style="left:0;top:6px;width:63px;color:#0000c0">去掉重复</div></div>
<div class="b btn" style="left:729px;top:641px;width:65px;height:24px;background:#f0f0f0;"><div class="t c" style="left:0;top:6px;width:63px;color:#0000c0">检查长度</div></div>
<div class="b btn" style="left:802px;top:641px;width:76px;height:24px;background:#f0f0f0;"><svg style="position:absolute;left:3px;top:3px" width="16" height="16" viewBox="0 0 16 16">
<rect x="1.25" y="1.25" width="13.5" height="13.5" fill="#c0c0c0" stroke="#000" stroke-width="1.5"/>
<rect x="3.5" y="1.5" width="9" height="7" fill="#fff" stroke="#000" stroke-width="1"/>
<rect x="4.5" y="10.5" width="8" height="4" fill="#000"/>
<rect x="5.5" y="11.5" width="1.6" height="2.6" fill="#c8c8c8"/><rect x="8" y="11.5" width="1.8" height="2.6" fill="#8a8a8a"/><rect x="10.6" y="11.5" width="1.2" height="2.6" fill="#c8c8c8"/>
<rect x="13" y="2.2" width="1" height="1.2" fill="#fff"/>
</svg><div class="t" style="left:24px;top:6px;color:#0000c0">保存数据</div></div>
<div class="grid" style="left:260px;top:690px;width:1451px;height:43px;background:#fff">
<div style="left:0px;top:0px;width:1375px;height:24px;background:#a5caa6;"></div>
<div style="left:0px;top:1px;width:49px;height:22px;background:#f8e6f0;"></div>
<div style="left:50px;top:1px;width:1324px;height:22px;background:#dcece4;"></div>
<div class="b" style="left:0px;top:24px;width:1375px;height:24px;background:#c0ffdc;border-bottom:1px solid #a5caa6;"></div>
<div style="left:0px;top:24px;width:49px;height:23px;background:#dcece6;"></div>
<div style="left:50px;top:24px;width:80px;height:23px;background:#f3fdfd;"></div>
<div style="left:217px;top:24px;width:100px;height:23px;background:#fff;"></div>
<div style="left:49px;top:0px;width:1px;height:48px;background:#a5caa6;"></div>
<div style="left:130px;top:0px;width:1px;height:48px;background:#a5caa6;"></div>
<div style="left:216px;top:0px;width:1px;height:48px;background:#a5caa6;"></div>
<div style="left:317px;top:0px;width:1px;height:48px;background:#a5caa6;"></div>
<div style="left:414px;top:0px;width:1px;height:48px;background:#a5caa6;"></div>
<div style="left:478px;top:0px;width:1px;height:48px;background:#a5caa6;"></div>
<div style="left:542px;top:0px;width:1px;height:48px;background:#a5caa6;"></div>
<div style="left:606px;top:0px;width:1px;height:48px;background:#a5caa6;"></div>
<div style="left:670px;top:0px;width:1px;height:48px;background:#a5caa6;"></div>
<div style="left:734px;top:0px;width:1px;height:48px;background:#a5caa6;"></div>
<div style="left:798px;top:0px;width:1px;height:48px;background:#a5caa6;"></div>
<div style="left:862px;top:0px;width:1px;height:48px;background:#a5caa6;"></div>
<div style="left:926px;top:0px;width:1px;height:48px;background:#a5caa6;"></div>
<div style="left:990px;top:0px;width:1px;height:48px;background:#a5caa6;"></div>
<div style="left:1054px;top:0px;width:1px;height:48px;background:#a5caa6;"></div>
<div style="left:1118px;top:0px;width:1px;height:48px;background:#a5caa6;"></div>
<div style="left:1182px;top:0px;width:1px;height:48px;background:#a5caa6;"></div>
<div style="left:1246px;top:0px;width:1px;height:48px;background:#a5caa6;"></div>
<div style="left:1310px;top:0px;width:1px;height:48px;background:#a5caa6;"></div>
<div style="left:1374px;top:0px;width:1px;height:48px;background:#a5caa6;"></div>
<div class="t c" style="left:-1px;top:4px;width:49px;color:#000080;">–</div>
<div class="t c" style="left:50px;top:6px;width:80px;color:#000080;">产品编号</div>
<div class="t c" style="left:131px;top:6px;width:85px;color:#000080;">目录编号</div>
<div class="t c" style="left:217px;top:6px;width:100px;color:#000080;">产品名称</div>
<div class="t c" style="left:318px;top:6px;width:96px;color:#000080;">计件单位</div>
<div class="t c" style="left:415px;top:6px;width:63px;color:#000080;">条形码</div>
<div class="t c" style="left:479px;top:6px;width:63px;color:#000080;">保质天数</div>
<div class="t c" style="left:543px;top:6px;width:63px;color:#000080;">规格</div>
<div class="t c" style="left:607px;top:6px;width:63px;color:#000080;">库存上限</div>
<div class="t c" style="left:671px;top:6px;width:63px;color:#000080;">库存下限</div>
<div class="t c" style="left:735px;top:5px;width:63px;color:#000080;">分仓库存</div>
<div class="t c" style="left:799px;top:5px;width:63px;color:#000080;">分仓库存</div>
<div class="t c" style="left:863px;top:6px;width:63px;color:#000080;">厂商</div>
<div class="t c" style="left:927px;top:6px;width:63px;color:#000080;">停用标志</div>
<div class="t c" style="left:991px;top:6px;width:63px;color:#000080;">最高进价</div>
<div class="t c" style="left:1055px;top:6px;width:63px;color:#000080;">参考进价</div>
<div class="t c" style="left:1119px;top:6px;width:63px;color:#000080;">最低售价</div>
<div class="t c" style="left:1183px;top:6px;width:63px;color:#000080;">参考售价</div>
<div class="t c" style="left:1247px;top:6px;width:63px;color:#000080;">性质编号</div>
<div class="t c" style="left:1311px;top:6px;width:63px;color:#000080;">顺序码</div>
<div class="t c" style="left:0px;top:29px;width:49px;color:#000080;">1</div>
<div class="t" style="left:547px;top:29px;">?55 大</div>
</div>
</body></html>
